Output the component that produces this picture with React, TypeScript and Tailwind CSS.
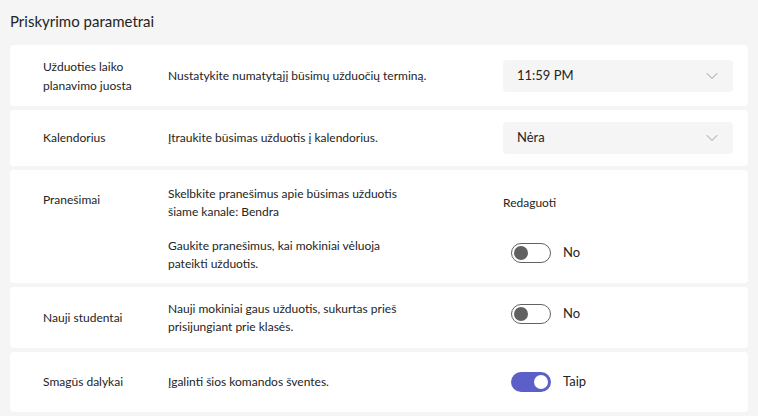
import { ChevronDown } from "lucide-react"

function Toggle({ on }: { on: boolean }) {
  return on ? (
    <div className="flex h-5 w-10 items-center justify-end rounded-full bg-[#5b5fc7] px-[3px]">
      <div className="h-[14px] w-[14px] rounded-full bg-white" />
    </div>
  ) : (
    <div className="flex h-5 w-10 items-center rounded-full border border-[#616161] bg-white px-[2px]">
      <div className="h-[14px] w-[14px] rounded-full bg-[#616161]" />
    </div>
  )
}

function Select({ value }: { value: string }) {
  return (
    <div className="flex h-8 w-[230px] items-center justify-between rounded-[4px] bg-[#f5f5f5] pl-[14px] pr-[11px]">
      <span className="text-[13px] text-[#242424]">{value}</span>
      <ChevronDown className="h-[20px] w-[20px] text-[#8a8a8a]" strokeWidth={1} />
    </div>
  )
}

export default function App() {
  return (
    <div
      className="h-[416px] w-[758px] bg-[#f5f5f5] px-[10px] text-[12px] text-[#242424]"
      style={{ fontFamily: "Lato, 'Noto Sans', sans-serif" }}
    >
      <h2 className="h-[45px] pt-[11px] text-[15px] leading-[20px]">Priskyrimo parametrai</h2>

      <div className="flex flex-col gap-1">
        {/* Laiko juosta */}
        <div className="flex h-[61px] items-center rounded-[4px] bg-white pl-[33px]">
          <div className="w-[125px] leading-[19px]">
            Užduoties laiko
            <br />
            planavimo juosta
          </div>
          <div className="w-[335px] leading-[18px]">Nustatykite numatytąjį būsimų užduočių terminą.</div>
          <Select value="11:59 PM" />
        </div>

        {/* Kalendorius */}
        <div className="flex h-[56px] items-center rounded-[4px] bg-white pl-[33px]">
          <div className="w-[125px]">Kalendorius</div>
          <div className="w-[335px]">Įtraukite būsimas užduotis į kalendorius.</div>
          <Select value="Nėra" />
        </div>

        {/* Pranešimai */}
        <div className="flex h-[113px] rounded-[4px] bg-white pl-[33px] pt-[15px]">
          <div className="w-[125px] pt-[6px]">Pranešimai</div>
          <div className="flex flex-col gap-4">
            <div className="flex items-center">
              <div className="w-[335px] leading-[18px]">
                Skelbkite pranešimus apie būsimas užduotis
                <br />
                šiame kanale: Bendra
              </div>
              <span>Redaguoti</span>
            </div>
            <div className="flex items-center">
              <div className="w-[343px] leading-[18px]">
                Gaukite pranešimus, kai mokiniai vėluoja
                <br />
                pateikti užduotis.
              </div>
              <div className="-mt-[4px] flex items-center gap-3">
                <Toggle on={false} />
                <span className="text-[13px]">No</span>
              </div>
            </div>
          </div>
        </div>

        {/* Nauji studentai */}
        <div className="flex h-[61px] items-center rounded-[4px] bg-white pl-[33px]">
          <div className="w-[125px]">Nauji studentai</div>
          <div className="w-[343px] leading-[18px]">
            Nauji mokiniai gaus užduotis, sukurtas prieš
            <br />
            prisijungiant prie klasės.
          </div>
          <div className="-mt-[8px] flex items-center gap-3">
            <Toggle on={false} />
            <span className="text-[13px]">No</span>
          </div>
        </div>

        {/* Smagūs dalykai */}
        <div className="flex h-[60px] items-center rounded-[4px] bg-white pl-[33px]">
          <div className="w-[125px]">Smagūs dalykai</div>
          <div className="w-[343px]">Įgalinti šios komandos šventes.</div>
          <div className="flex items-center gap-3">
            <Toggle on />
            <span className="text-[13px]">Taip</span>
          </div>
        </div>
      </div>
    </div>
  )
}
